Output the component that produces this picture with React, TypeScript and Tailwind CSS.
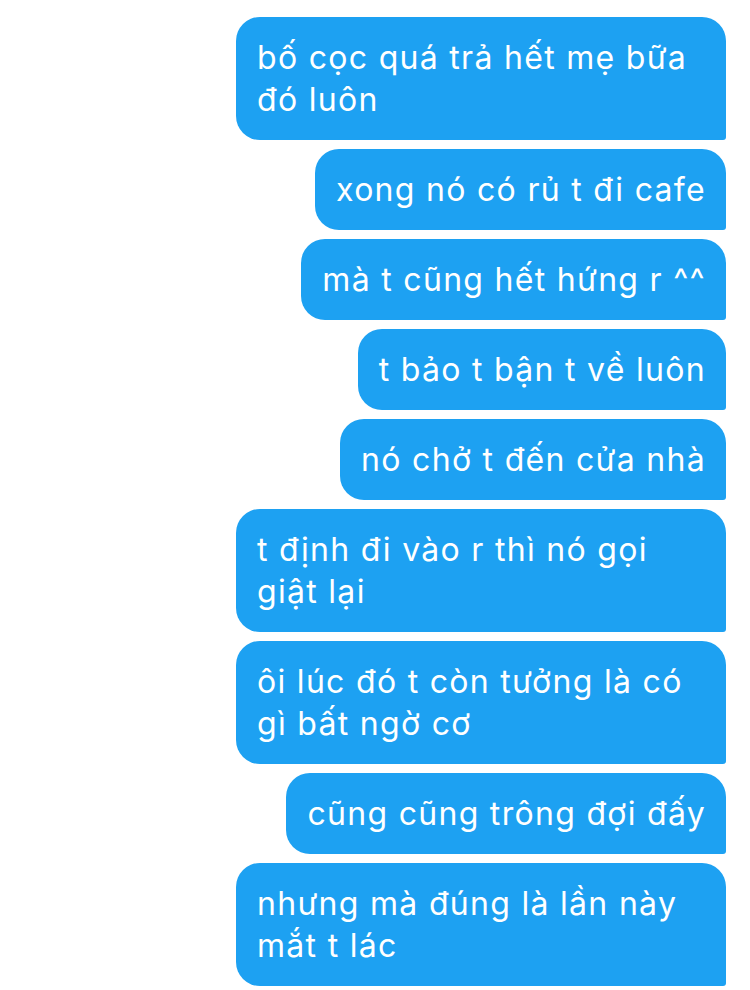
import React from "react";

const messages = [
  "bố cọc quá trả hết mẹ bữa đó luôn",
  "xong nó có rủ t đi cafe",
  "mà t cũng hết hứng r ^^",
  "t bảo t bận t về luôn",
  "nó chở t đến cửa nhà",
  "t định đi vào r thì nó gọi giật lại",
  "ôi lúc đó t còn tưởng là có gì bất ngờ cơ",
  "cũng cũng trông đợi đấy",
  "nhưng mà đúng là lần này mắt t lác",
];

export default function App() {
  return (
    <div
      className="w-[750px] h-[990px] bg-white overflow-hidden flex flex-col items-end gap-[9px] pt-[17px] pr-[24px]"
      style={{ fontFamily: "Inter, 'Noto Sans', sans-serif" }}
    >
      {messages.map((m, i) => (
        <div
          key={i}
          className="max-w-[490px] bg-[#1da1f2] text-white text-[32px] leading-[42px] pl-[21px] pr-[20px] py-[19.5px] rounded-[24px] rounded-br-[3px] tracking-[1.3px]"
        >
          {m}
        </div>
      ))}
    </div>
  );
}
